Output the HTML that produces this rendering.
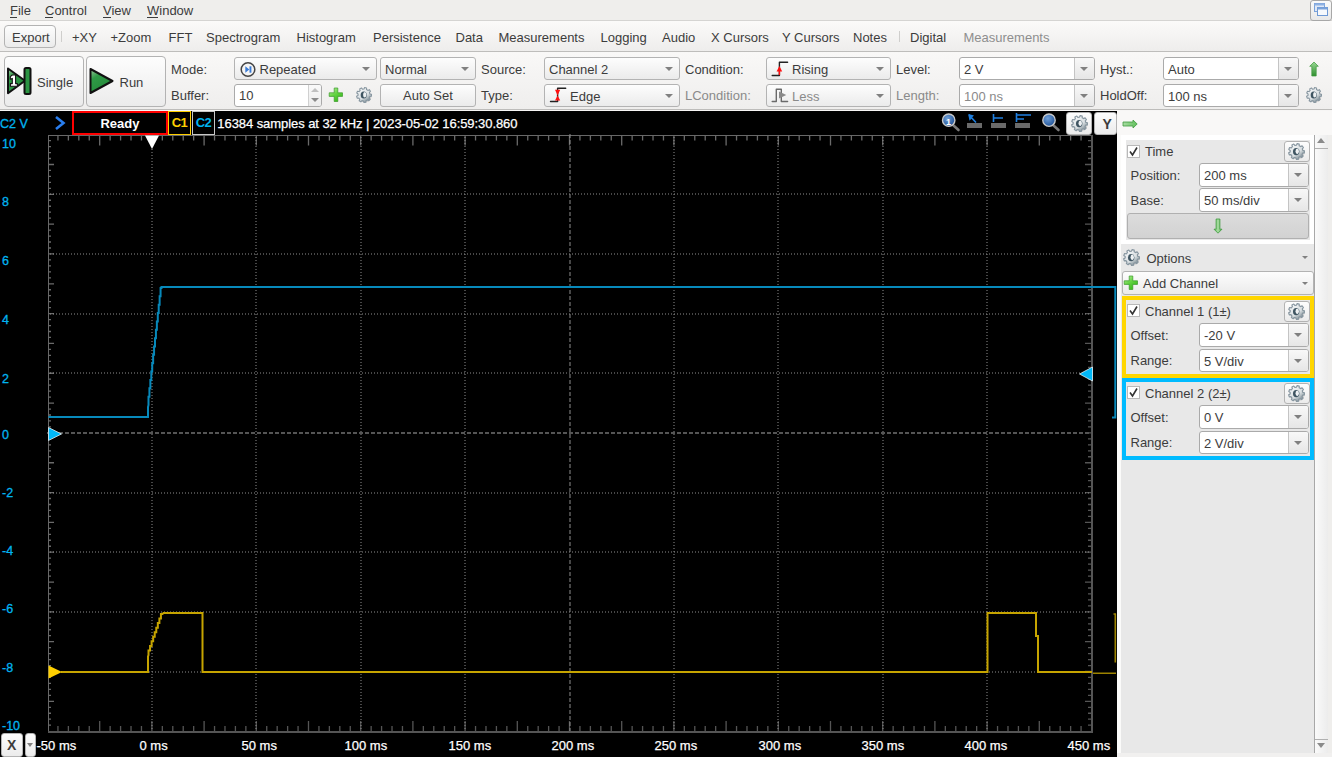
<!DOCTYPE html>
<html><head><meta charset="utf-8"><style>
html,body{margin:0;padding:0;}
body{width:1332px;height:757px;overflow:hidden;position:relative;background:#efeeec;font-family:"Liberation Sans", sans-serif;}
.t{position:absolute;white-space:pre;line-height:1;}
</style></head><body>

<div class="t" style="left:10px;top:4.0px;font-size:13px;color:#3c3c3c;font-weight:normal;">File</div>
<div class="t" style="left:45px;top:4.0px;font-size:13px;color:#3c3c3c;font-weight:normal;">Control</div>
<div class="t" style="left:103px;top:4.0px;font-size:13px;color:#3c3c3c;font-weight:normal;">View</div>
<div class="t" style="left:147px;top:4.0px;font-size:13px;color:#3c3c3c;font-weight:normal;">Window</div>
<div style="position:absolute;left:10px;top:16.5px;width:7px;height:1px;background:#3c3c3c;"></div>
<div style="position:absolute;left:45px;top:16.5px;width:8px;height:1px;background:#3c3c3c;"></div>
<div style="position:absolute;left:103px;top:16.5px;width:8px;height:1px;background:#3c3c3c;"></div>
<div style="position:absolute;left:147px;top:16.5px;width:11px;height:1px;background:#3c3c3c;"></div>
<div style="position:absolute;left:0px;top:20px;width:1332px;height:1px;background:#d5d4d2;"></div>
<div style="position:absolute;left:1310px;top:0px;width:22px;height:21px;box-sizing:border-box;border:1px solid #a8a8a8;border-radius:3px;background:linear-gradient(#fafafa,#e8e8e8);"></div>
<svg style="position:absolute;left:1310px;top:0" width="22" height="20" viewBox="0 0 22 20">
<rect x="4.5" y="3.5" width="10" height="8" fill="#dfe8f6" stroke="#7aa2da" stroke-width="1"/>
<rect x="4.5" y="3.5" width="10" height="2" fill="#8fb2e3"/>
<rect x="7.5" y="7.5" width="10" height="8" fill="#f6f9fd" stroke="#6f9ad6" stroke-width="1"/>
<rect x="7.5" y="7.5" width="10" height="2" fill="#7aa2da"/>
</svg>
<div style="position:absolute;left:0px;top:21px;width:1332px;height:30px;background:linear-gradient(#fbfaf9,#eeedec);"></div>
<div style="position:absolute;left:0px;top:51px;width:1332px;height:1px;background:#bebdbb;"></div>
<div style="position:absolute;left:4px;top:25px;width:52px;height:23px;box-sizing:border-box;border:1px solid #b3b3b3;border-radius:4px;background:linear-gradient(#fdfdfd,#ebebeb);"></div>
<div class="t" style="left:12px;top:30.5px;font-size:13px;color:#3c3c3c;font-weight:normal;">Export</div>
<div style="position:absolute;left:61px;top:31px;width:1px;height:11px;background:#cfcecc;"></div>
<div class="t" style="left:72px;top:30.5px;font-size:13px;color:#3c3c3c;font-weight:normal;">+XY</div>
<div class="t" style="left:110.5px;top:30.5px;font-size:13px;color:#3c3c3c;font-weight:normal;">+Zoom</div>
<div class="t" style="left:168.5px;top:30.5px;font-size:13px;color:#3c3c3c;font-weight:normal;">FFT</div>
<div class="t" style="left:206px;top:30.5px;font-size:13px;color:#3c3c3c;font-weight:normal;">Spectrogram</div>
<div class="t" style="left:296.5px;top:30.5px;font-size:13px;color:#3c3c3c;font-weight:normal;">Histogram</div>
<div class="t" style="left:373px;top:30.5px;font-size:13px;color:#3c3c3c;font-weight:normal;">Persistence</div>
<div class="t" style="left:455.5px;top:30.5px;font-size:13px;color:#3c3c3c;font-weight:normal;">Data</div>
<div class="t" style="left:498.5px;top:30.5px;font-size:13px;color:#3c3c3c;font-weight:normal;">Measurements</div>
<div class="t" style="left:600.5px;top:30.5px;font-size:13px;color:#3c3c3c;font-weight:normal;">Logging</div>
<div class="t" style="left:662px;top:30.5px;font-size:13px;color:#3c3c3c;font-weight:normal;">Audio</div>
<div class="t" style="left:711px;top:30.5px;font-size:13px;color:#3c3c3c;font-weight:normal;">X Cursors</div>
<div class="t" style="left:782px;top:30.5px;font-size:13px;color:#3c3c3c;font-weight:normal;">Y Cursors</div>
<div class="t" style="left:853px;top:30.5px;font-size:13px;color:#3c3c3c;font-weight:normal;">Notes</div>
<div class="t" style="left:910px;top:30.5px;font-size:13px;color:#3c3c3c;font-weight:normal;">Digital</div>
<div style="position:absolute;left:899px;top:31px;width:1px;height:11px;background:#cfcecc;"></div>
<div class="t" style="left:963.5px;top:30.5px;font-size:13px;color:#8e8e8e;font-weight:normal;">Measurements</div>
<div style="position:absolute;left:0px;top:52px;width:1332px;height:57px;background:linear-gradient(#f9f8f7,#efeeed);"></div>
<div style="position:absolute;left:0px;top:109px;width:1332px;height:1px;background:#bdbcba;"></div>
<div style="position:absolute;left:0px;top:110px;width:1332px;height:1px;background:#f7f6f5;"></div>
<div style="position:absolute;left:4px;top:56px;width:80px;height:51px;box-sizing:border-box;border:1px solid #b3b3b3;border-radius:4px;background:linear-gradient(#fdfdfd,#ebebeb);"></div>
<div style="position:absolute;left:86px;top:56px;width:80px;height:51px;box-sizing:border-box;border:1px solid #b3b3b3;border-radius:4px;background:linear-gradient(#fdfdfd,#ebebeb);"></div>
<svg style="position:absolute;left:0;top:56px" width="170" height="51" viewBox="0 56 170 51">
<defs><linearGradient id="gg" x1="0" y1="0" x2="0.6" y2="1"><stop offset="0" stop-color="#9cc79f"/><stop offset="0.35" stop-color="#2f9a46"/><stop offset="1" stop-color="#238a3a"/></linearGradient></defs>
<path d="M8 68.5 L25 80.7 L8 93.2 Z" fill="url(#gg)" stroke="#111" stroke-width="2" stroke-linejoin="round"/>
<rect x="24.5" y="68" width="6" height="26" rx="1.5" fill="#2b9443" stroke="#111" stroke-width="2"/>
<path d="M12.3 75 H15.6 V83.6 H17.4 V86.2 H10.4 V83.6 H12.3 V78.4 L10.3 79.2 V76.6 Z" fill="#fff" stroke="#111" stroke-width="1.1" stroke-linejoin="round"/>
<path d="M90.5 69 L112.5 81 L90.5 93 Z" fill="url(#gg)" stroke="#111" stroke-width="2" stroke-linejoin="round"/>
</svg>
<div class="t" style="left:37px;top:75.5px;font-size:13px;color:#3c3c3c;font-weight:normal;">Single</div>
<div class="t" style="left:119.5px;top:75.5px;font-size:13px;color:#3c3c3c;font-weight:normal;">Run</div>
<div class="t" style="left:171px;top:62.5px;font-size:13px;color:#3c3c3c;font-weight:normal;">Mode:</div>
<div class="t" style="left:171px;top:88.5px;font-size:13px;color:#3c3c3c;font-weight:normal;">Buffer:</div>
<div style="position:absolute;left:234px;top:57px;width:143px;height:23px;box-sizing:border-box;border:1px solid #b3b3b3;border-radius:3px;background:linear-gradient(#fdfdfd,#ebebeb);"></div>
<div class="t" style="left:259.5px;top:62.8px;font-size:13px;color:#3c3c3c;font-weight:normal;">Repeated</div>
<div style="position:absolute;left:361.5px;top:66.75px;width:0;height:0;border-left:4.0px solid transparent;border-right:4.0px solid transparent;border-top:4.5px solid #808080;"></div>
<svg style="position:absolute;left:238px;top:59px" width="20" height="21" viewBox="238 59 20 21">
<circle cx="248" cy="69.5" r="6.8" fill="#f4f4f4" stroke="#444" stroke-width="1.5"/>
<path d="M245.3 66.3 L249.3 69.5 L245.3 72.7 Z" fill="#3a7bd5"/><rect x="249.5" y="66.3" width="1.9" height="6.4" fill="#3a7bd5"/>
</svg>
<div style="position:absolute;left:234px;top:84px;width:88px;height:22.5px;box-sizing:border-box;border:1px solid #aaaaaa;border-radius:3px;background:#fff;"></div>
<div style="position:absolute;left:308px;top:85px;width:13px;height:20.5px;box-sizing:border-box;border-left:1px solid #d0d0d0;background:linear-gradient(#f9f9f9,#ececec);border-radius:0 2px 2px 0;"></div>
<div style="position:absolute;left:311px;top:88px;width:0;height:0;border-left:4px solid transparent;border-right:4px solid transparent;border-bottom:4px solid #c0c0c0;"></div>
<div style="position:absolute;left:311px;top:98px;width:0;height:0;border-left:4px solid transparent;border-right:4px solid transparent;border-top:4px solid #8a8a8a;"></div>
<div class="t" style="left:239px;top:88.5px;font-size:13px;color:#3c3c3c;font-weight:normal;">10</div>
<svg style="position:absolute;left:328px;top:87px" width="16" height="16" viewBox="0 0 16 16">
<defs><linearGradient id="plg" x1="0" y1="0" x2="0.7" y2="1"><stop offset="0" stop-color="#bff5a8"/><stop offset="0.5" stop-color="#66d444"/><stop offset="1" stop-color="#36b81a"/></linearGradient></defs><path d="M6.2 1 H9.8 V5.8 H14.5 V9.4 H9.8 V14.5 H6.2 V9.4 H1.2 V5.8 H6.2 Z" fill="url(#plg)" stroke="#3a9a28" stroke-width="0.7" stroke-linejoin="round"/>
</svg>
<svg style="position:absolute;left:356px;top:87px" width="16" height="16" viewBox="0 0 16 16">
<defs><linearGradient id="gearg" x1="0.2" y1="0.1" x2="0.8" y2="0.9"><stop offset="0" stop-color="#f4f6f7"/><stop offset="0.6" stop-color="#d9dfe2"/><stop offset="1" stop-color="#7d8c94"/></linearGradient></defs>
<ellipse cx="9" cy="9.6" rx="6.5" ry="5.8" fill="#000" opacity="0.12"/>
<path d="M8.00 2.00 L8.63 0.53 L10.57 0.95 L10.52 2.55 L11.86 3.40 L13.28 2.68 L14.50 4.25 L13.43 5.45 L13.91 6.96 L15.47 7.32 L15.39 9.30 L13.80 9.53 L13.20 11.00 L14.16 12.28 L12.82 13.75 L11.46 12.90 L10.05 13.64 L9.97 15.24 L8.00 15.50 L7.50 13.98 L5.95 13.64 L4.85 14.81 L3.18 13.75 L3.77 12.26 L2.80 11.00 L1.21 11.19 L0.61 9.30 L2.02 8.54 L2.09 6.96 L0.75 6.08 L1.50 4.25 L3.07 4.58 L4.14 3.40 L3.68 1.87 L5.43 0.95 L6.43 2.21 Z" fill="url(#gearg)" stroke="#8796a0" stroke-width="1.1" stroke-linejoin="round"/>
<ellipse cx="7.7" cy="8.1" rx="3" ry="3.5" fill="#3f5562"/>
<ellipse cx="8.7" cy="7.8" rx="1.6" ry="2.7" fill="#eef1f3"/>
</svg>
<div style="position:absolute;left:380px;top:57px;width:96px;height:23px;box-sizing:border-box;border:1px solid #b3b3b3;border-radius:3px;background:linear-gradient(#fdfdfd,#ebebeb);"></div>
<div class="t" style="left:385px;top:62.8px;font-size:13px;color:#3c3c3c;font-weight:normal;">Normal</div>
<div style="position:absolute;left:460.5px;top:66.75px;width:0;height:0;border-left:4.0px solid transparent;border-right:4.0px solid transparent;border-top:4.5px solid #808080;"></div>
<div style="position:absolute;left:380px;top:84px;width:96px;height:23px;box-sizing:border-box;border:1px solid #b3b3b3;border-radius:3px;background:linear-gradient(#fdfdfd,#ebebeb);"></div>
<div class="t" style="left:403px;top:89.3px;font-size:13px;color:#3c3c3c;font-weight:normal;">Auto Set</div>
<div class="t" style="left:481px;top:62.5px;font-size:13px;color:#3c3c3c;font-weight:normal;">Source:</div>
<div class="t" style="left:481px;top:88.5px;font-size:13px;color:#3c3c3c;font-weight:normal;">Type:</div>
<div style="position:absolute;left:544px;top:57px;width:136px;height:23px;box-sizing:border-box;border:1px solid #b3b3b3;border-radius:3px;background:linear-gradient(#fdfdfd,#ebebeb);"></div>
<div class="t" style="left:549px;top:62.8px;font-size:13px;color:#3c3c3c;font-weight:normal;">Channel 2</div>
<div style="position:absolute;left:664.5px;top:66.75px;width:0;height:0;border-left:4.0px solid transparent;border-right:4.0px solid transparent;border-top:4.5px solid #808080;"></div>
<div style="position:absolute;left:544px;top:84px;width:136px;height:23px;box-sizing:border-box;border:1px solid #b3b3b3;border-radius:3px;background:linear-gradient(#fdfdfd,#ebebeb);"></div>
<div class="t" style="left:570px;top:89.8px;font-size:13px;color:#3c3c3c;font-weight:normal;">Edge</div>
<div style="position:absolute;left:664.5px;top:93.75px;width:0;height:0;border-left:4.0px solid transparent;border-right:4.0px solid transparent;border-top:4.5px solid #808080;"></div>
<svg style="position:absolute;left:544px;top:84px" width="26" height="23" viewBox="544 84 26 23">
<path d="M550.5 101.5 H557.6 V88.3 H565.7" fill="none" stroke="#222" stroke-width="1.4" stroke-linejoin="round" stroke-linecap="round"/>
<path d="M555 89.8 H560.2 L557.6 95.4 Z M555 100.6 H560.2 L557.6 95.4 Z" fill="#ff1010"/>
</svg>
<div class="t" style="left:685px;top:62.5px;font-size:13px;color:#3c3c3c;font-weight:normal;">Condition:</div>
<div class="t" style="left:685px;top:88.5px;font-size:13px;color:#8a8a8a;font-weight:normal;">LCondition:</div>
<div style="position:absolute;left:766px;top:57px;width:125px;height:23px;box-sizing:border-box;border:1px solid #b3b3b3;border-radius:3px;background:linear-gradient(#fdfdfd,#ebebeb);"></div>
<div class="t" style="left:792px;top:62.8px;font-size:13px;color:#3c3c3c;font-weight:normal;">Rising</div>
<div style="position:absolute;left:875.5px;top:66.75px;width:0;height:0;border-left:4.0px solid transparent;border-right:4.0px solid transparent;border-top:4.5px solid #808080;"></div>
<svg style="position:absolute;left:766px;top:57px" width="26" height="23" viewBox="766 57 26 23">
<path d="M772.2 75.5 H779.4 V62.3 H787.6" fill="none" stroke="#222" stroke-width="1.4" stroke-linejoin="round" stroke-linecap="round"/>
<path d="M779.4 66 L782.2 71.5 H776.6 Z" fill="#ff1010"/><rect x="778.7" y="70" width="1.4" height="5" fill="#ff1010"/>
</svg>
<div style="position:absolute;left:766px;top:84px;width:125px;height:23px;box-sizing:border-box;border:1px solid #b3b3b3;border-radius:3px;background:linear-gradient(#fdfdfd,#ebebeb);"></div>
<div class="t" style="left:792px;top:89.8px;font-size:13px;color:#8a8a8a;font-weight:normal;">Less</div>
<div style="position:absolute;left:875.5px;top:93.75px;width:0;height:0;border-left:4.0px solid transparent;border-right:4.0px solid transparent;border-top:4.5px solid #808080;"></div>
<svg style="position:absolute;left:766px;top:84px" width="26" height="23" viewBox="766 84 26 23">
<path d="M772.2 101.5 H776.3 V89.3 H781.3 V101.5 H787.6" fill="none" stroke="#6a6a6a" stroke-width="1.4" stroke-linejoin="round" stroke-linecap="round"/>
<path d="M779 91.5 L786.3 95 L779 98.5 Z" fill="#8a8a8a"/>
</svg>
<div class="t" style="left:896px;top:62.5px;font-size:13px;color:#3c3c3c;font-weight:normal;">Level:</div>
<div class="t" style="left:896px;top:88.5px;font-size:13px;color:#8a8a8a;font-weight:normal;">Length:</div>
<div style="position:absolute;left:959px;top:57px;width:136px;height:23px;box-sizing:border-box;border:1px solid #aaaaaa;border-radius:3px;background:#fff;overflow:hidden;"></div>
<div style="position:absolute;left:1074px;top:58px;width:20px;height:21px;box-sizing:border-box;border-left:1px solid #c4c4c4;border-radius:0 2px 2px 0;background:linear-gradient(#f8f8f8,#e6e6e6);"></div>
<div class="t" style="left:964px;top:62.8px;font-size:13px;color:#3c3c3c;font-weight:normal;">2 V</div>
<div style="position:absolute;left:1080.0px;top:66.75px;width:0;height:0;border-left:4.0px solid transparent;border-right:4.0px solid transparent;border-top:4.5px solid #808080;"></div>
<div style="position:absolute;left:959px;top:84px;width:136px;height:23px;box-sizing:border-box;border:1px solid #aaaaaa;border-radius:3px;background:#fff;overflow:hidden;"></div>
<div style="position:absolute;left:1074px;top:85px;width:20px;height:21px;box-sizing:border-box;border-left:1px solid #c4c4c4;border-radius:0 2px 2px 0;background:linear-gradient(#f8f8f8,#e6e6e6);"></div>
<div class="t" style="left:964px;top:89.8px;font-size:13px;color:#8a8a8a;font-weight:normal;">100 ns</div>
<div style="position:absolute;left:1080.0px;top:93.75px;width:0;height:0;border-left:4.0px solid transparent;border-right:4.0px solid transparent;border-top:4.5px solid #808080;"></div>
<div class="t" style="left:1100px;top:62.5px;font-size:13px;color:#3c3c3c;font-weight:normal;">Hyst.:</div>
<div class="t" style="left:1100px;top:88.5px;font-size:13px;color:#3c3c3c;font-weight:normal;">HoldOff:</div>
<div style="position:absolute;left:1163px;top:57px;width:136px;height:23px;box-sizing:border-box;border:1px solid #aaaaaa;border-radius:3px;background:#fff;overflow:hidden;"></div>
<div style="position:absolute;left:1278px;top:58px;width:20px;height:21px;box-sizing:border-box;border-left:1px solid #c4c4c4;border-radius:0 2px 2px 0;background:linear-gradient(#f8f8f8,#e6e6e6);"></div>
<div class="t" style="left:1168px;top:62.8px;font-size:13px;color:#3c3c3c;font-weight:normal;">Auto</div>
<div style="position:absolute;left:1284.0px;top:66.75px;width:0;height:0;border-left:4.0px solid transparent;border-right:4.0px solid transparent;border-top:4.5px solid #808080;"></div>
<div style="position:absolute;left:1163px;top:84px;width:136px;height:23px;box-sizing:border-box;border:1px solid #aaaaaa;border-radius:3px;background:#fff;overflow:hidden;"></div>
<div style="position:absolute;left:1278px;top:85px;width:20px;height:21px;box-sizing:border-box;border-left:1px solid #c4c4c4;border-radius:0 2px 2px 0;background:linear-gradient(#f8f8f8,#e6e6e6);"></div>
<div class="t" style="left:1168px;top:89.8px;font-size:13px;color:#3c3c3c;font-weight:normal;">100 ns</div>
<div style="position:absolute;left:1284.0px;top:93.75px;width:0;height:0;border-left:4.0px solid transparent;border-right:4.0px solid transparent;border-top:4.5px solid #808080;"></div>
<svg style="position:absolute;left:1300px;top:55px" width="30" height="25" viewBox="1300 55 30 25">
<defs><linearGradient id="ua" x1="0" y1="0" x2="0" y2="1"><stop offset="0" stop-color="#9ad894"/><stop offset="1" stop-color="#2f8f2f"/></linearGradient></defs>
<path d="M1314 62 L1318.3 66.3 H1316.2 V76 H1311.8 V66.3 H1309.7 Z" fill="url(#ua)" stroke="#3d9a3d" stroke-width="0.7"/>
</svg>
<svg style="position:absolute;left:1306px;top:87px" width="16" height="16" viewBox="0 0 16 16">
<defs><linearGradient id="gearg" x1="0.2" y1="0.1" x2="0.8" y2="0.9"><stop offset="0" stop-color="#f4f6f7"/><stop offset="0.6" stop-color="#d9dfe2"/><stop offset="1" stop-color="#7d8c94"/></linearGradient></defs>
<ellipse cx="9" cy="9.6" rx="6.5" ry="5.8" fill="#000" opacity="0.12"/>
<path d="M8.00 2.00 L8.63 0.53 L10.57 0.95 L10.52 2.55 L11.86 3.40 L13.28 2.68 L14.50 4.25 L13.43 5.45 L13.91 6.96 L15.47 7.32 L15.39 9.30 L13.80 9.53 L13.20 11.00 L14.16 12.28 L12.82 13.75 L11.46 12.90 L10.05 13.64 L9.97 15.24 L8.00 15.50 L7.50 13.98 L5.95 13.64 L4.85 14.81 L3.18 13.75 L3.77 12.26 L2.80 11.00 L1.21 11.19 L0.61 9.30 L2.02 8.54 L2.09 6.96 L0.75 6.08 L1.50 4.25 L3.07 4.58 L4.14 3.40 L3.68 1.87 L5.43 0.95 L6.43 2.21 Z" fill="url(#gearg)" stroke="#8796a0" stroke-width="1.1" stroke-linejoin="round"/>
<ellipse cx="7.7" cy="8.1" rx="3" ry="3.5" fill="#3f5562"/>
<ellipse cx="8.7" cy="7.8" rx="1.6" ry="2.7" fill="#eef1f3"/>
</svg>
<div style="position:absolute;left:0px;top:111px;width:1117px;height:646px;background:#000;"></div>
<svg style="position:absolute;left:0;top:0" width="1117" height="757" viewBox="0 0 1117 757">
<path d="M48.5 135 V733 M48 135.5 H1093" fill="none" stroke="#686868" stroke-width="1"/>
<path d="M1092 135 V733 M48 732 H1093" fill="none" stroke="#555555" stroke-width="2"/>
<path d="M57.940 135.5v5M68.380 135.5v5M78.820 135.5v5M89.260 135.5v5M99.700 135.5v10M110.140 135.5v5M120.580 135.5v5M131.020 135.5v5M141.460 135.5v5M151.900 135.5v10M162.340 135.5v5M172.780 135.5v5M183.220 135.5v5M193.660 135.5v5M204.100 135.5v10M214.540 135.5v5M224.980 135.5v5M235.420 135.5v5M245.860 135.5v5M256.300 135.5v10M266.740 135.5v5M277.180 135.5v5M287.620 135.5v5M298.060 135.5v5M308.500 135.5v10M318.940 135.5v5M329.380 135.5v5M339.820 135.5v5M350.260 135.5v5M360.700 135.5v10M371.140 135.5v5M381.580 135.5v5M392.020 135.5v5M402.460 135.5v5M412.900 135.5v10M423.340 135.5v5M433.780 135.5v5M444.220 135.5v5M454.660 135.5v5M465.100 135.5v10M475.540 135.5v5M485.980 135.5v5M496.420 135.5v5M506.860 135.5v5M517.300 135.5v10M527.740 135.5v5M538.180 135.5v5M548.620 135.5v5M559.060 135.5v5M569.500 135.5v10M579.940 135.5v5M590.380 135.5v5M600.820 135.5v5M611.260 135.5v5M621.700 135.5v10M632.140 135.5v5M642.580 135.5v5M653.020 135.5v5M663.460 135.5v5M673.900 135.5v10M684.340 135.5v5M694.780 135.5v5M705.220 135.5v5M715.660 135.5v5M726.100 135.5v10M736.540 135.5v5M746.980 135.5v5M757.420 135.5v5M767.860 135.5v5M778.300 135.5v10M788.740 135.5v5M799.180 135.5v5M809.620 135.5v5M820.060 135.5v5M830.500 135.5v10M840.940 135.5v5M851.380 135.5v5M861.820 135.5v5M872.260 135.5v5M882.700 135.5v10M893.140 135.5v5M903.580 135.5v5M914.020 135.5v5M924.460 135.5v5M934.900 135.5v10M945.340 135.5v5M955.780 135.5v5M966.220 135.5v5M976.660 135.5v5M987.100 135.5v10M997.540 135.5v5M1007.980 135.5v5M1018.420 135.5v5M1028.860 135.5v5M1039.300 135.5v10M1049.740 135.5v5M1060.180 135.5v5M1070.620 135.5v5M1081.060 135.5v5M48.5 140.615h2.5M48.5 146.580h2.5M48.5 152.545h2.5M48.5 158.510h2.5M48.5 164.475h5.5M48.5 170.440h2.5M48.5 176.405h2.5M48.5 182.370h2.5M48.5 188.335h2.5M48.5 194.300h5.5M48.5 200.265h2.5M48.5 206.230h2.5M48.5 212.195h2.5M48.5 218.160h2.5M48.5 224.125h5.5M48.5 230.090h2.5M48.5 236.055h2.5M48.5 242.020h2.5M48.5 247.985h2.5M48.5 253.950h5.5M48.5 259.915h2.5M48.5 265.880h2.5M48.5 271.845h2.5M48.5 277.810h2.5M48.5 283.775h5.5M48.5 289.740h2.5M48.5 295.705h2.5M48.5 301.670h2.5M48.5 307.635h2.5M48.5 313.600h5.5M48.5 319.565h2.5M48.5 325.530h2.5M48.5 331.495h2.5M48.5 337.460h2.5M48.5 343.425h5.5M48.5 349.390h2.5M48.5 355.355h2.5M48.5 361.320h2.5M48.5 367.285h2.5M48.5 373.250h5.5M48.5 379.215h2.5M48.5 385.180h2.5M48.5 391.145h2.5M48.5 397.110h2.5M48.5 403.075h5.5M48.5 409.040h2.5M48.5 415.005h2.5M48.5 420.970h2.5M48.5 426.935h2.5M48.5 432.900h5.5M48.5 438.865h2.5M48.5 444.830h2.5M48.5 450.795h2.5M48.5 456.760h2.5M48.5 462.725h5.5M48.5 468.690h2.5M48.5 474.655h2.5M48.5 480.620h2.5M48.5 486.585h2.5M48.5 492.550h5.5M48.5 498.515h2.5M48.5 504.480h2.5M48.5 510.445h2.5M48.5 516.410h2.5M48.5 522.375h5.5M48.5 528.340h2.5M48.5 534.305h2.5M48.5 540.270h2.5M48.5 546.235h2.5M48.5 552.200h5.5M48.5 558.165h2.5M48.5 564.130h2.5M48.5 570.095h2.5M48.5 576.060h2.5M48.5 582.025h5.5M48.5 587.990h2.5M48.5 593.955h2.5M48.5 599.920h2.5M48.5 605.885h2.5M48.5 611.850h5.5M48.5 617.815h2.5M48.5 623.780h2.5M48.5 629.745h2.5M48.5 635.710h2.5M48.5 641.675h5.5M48.5 647.640h2.5M48.5 653.605h2.5M48.5 659.570h2.5M48.5 665.535h2.5M48.5 671.500h5.5M48.5 677.465h2.5M48.5 683.430h2.5M48.5 689.395h2.5M48.5 695.360h2.5M48.5 701.325h5.5M48.5 707.290h2.5M48.5 713.255h2.5M48.5 719.220h2.5M48.5 725.185h2.5" stroke="#6a6a6a" stroke-width="1.3" fill="none"/>
<path d="M57.940 731v-5M68.380 731v-5M78.820 731v-5M89.260 731v-5M99.700 731v-10M110.140 731v-5M120.580 731v-5M131.020 731v-5M141.460 731v-5M151.900 731v-10M162.340 731v-5M172.780 731v-5M183.220 731v-5M193.660 731v-5M204.100 731v-10M214.540 731v-5M224.980 731v-5M235.420 731v-5M245.860 731v-5M256.300 731v-10M266.740 731v-5M277.180 731v-5M287.620 731v-5M298.060 731v-5M308.500 731v-10M318.940 731v-5M329.380 731v-5M339.820 731v-5M350.260 731v-5M360.700 731v-10M371.140 731v-5M381.580 731v-5M392.020 731v-5M402.460 731v-5M412.900 731v-10M423.340 731v-5M433.780 731v-5M444.220 731v-5M454.660 731v-5M465.100 731v-10M475.540 731v-5M485.980 731v-5M496.420 731v-5M506.860 731v-5M517.300 731v-10M527.740 731v-5M538.180 731v-5M548.620 731v-5M559.060 731v-5M569.500 731v-10M579.940 731v-5M590.380 731v-5M600.820 731v-5M611.260 731v-5M621.700 731v-10M632.140 731v-5M642.580 731v-5M653.020 731v-5M663.460 731v-5M673.900 731v-10M684.340 731v-5M694.780 731v-5M705.220 731v-5M715.660 731v-5M726.100 731v-10M736.540 731v-5M746.980 731v-5M757.420 731v-5M767.860 731v-5M778.300 731v-10M788.740 731v-5M799.180 731v-5M809.620 731v-5M820.060 731v-5M830.500 731v-10M840.940 731v-5M851.380 731v-5M861.820 731v-5M872.260 731v-5M882.700 731v-10M893.140 731v-5M903.580 731v-5M914.020 731v-5M924.460 731v-5M934.900 731v-10M945.340 731v-5M955.780 731v-5M966.220 731v-5M976.660 731v-5M987.100 731v-10M997.540 731v-5M1007.980 731v-5M1018.420 731v-5M1028.860 731v-5M1039.300 731v-10M1049.740 731v-5M1060.180 731v-5M1070.620 731v-5M1081.060 731v-5M1091 140.615h-3M1091 146.580h-3M1091 152.545h-3M1091 158.510h-3M1091 164.475h-6M1091 170.440h-3M1091 176.405h-3M1091 182.370h-3M1091 188.335h-3M1091 194.300h-6M1091 200.265h-3M1091 206.230h-3M1091 212.195h-3M1091 218.160h-3M1091 224.125h-6M1091 230.090h-3M1091 236.055h-3M1091 242.020h-3M1091 247.985h-3M1091 253.950h-6M1091 259.915h-3M1091 265.880h-3M1091 271.845h-3M1091 277.810h-3M1091 283.775h-6M1091 289.740h-3M1091 295.705h-3M1091 301.670h-3M1091 307.635h-3M1091 313.600h-6M1091 319.565h-3M1091 325.530h-3M1091 331.495h-3M1091 337.460h-3M1091 343.425h-6M1091 349.390h-3M1091 355.355h-3M1091 361.320h-3M1091 367.285h-3M1091 373.250h-6M1091 379.215h-3M1091 385.180h-3M1091 391.145h-3M1091 397.110h-3M1091 403.075h-6M1091 409.040h-3M1091 415.005h-3M1091 420.970h-3M1091 426.935h-3M1091 432.900h-6M1091 438.865h-3M1091 444.830h-3M1091 450.795h-3M1091 456.760h-3M1091 462.725h-6M1091 468.690h-3M1091 474.655h-3M1091 480.620h-3M1091 486.585h-3M1091 492.550h-6M1091 498.515h-3M1091 504.480h-3M1091 510.445h-3M1091 516.410h-3M1091 522.375h-6M1091 528.340h-3M1091 534.305h-3M1091 540.270h-3M1091 546.235h-3M1091 552.200h-6M1091 558.165h-3M1091 564.130h-3M1091 570.095h-3M1091 576.060h-3M1091 582.025h-6M1091 587.990h-3M1091 593.955h-3M1091 599.920h-3M1091 605.885h-3M1091 611.850h-6M1091 617.815h-3M1091 623.780h-3M1091 629.745h-3M1091 635.710h-3M1091 641.675h-6M1091 647.640h-3M1091 653.605h-3M1091 659.570h-3M1091 665.535h-3M1091 671.500h-6M1091 677.465h-3M1091 683.430h-3M1091 689.395h-3M1091 695.360h-3M1091 701.325h-6M1091 707.290h-3M1091 713.255h-3M1091 719.220h-3M1091 725.185h-3" stroke="#555555" stroke-width="1.3" fill="none"/>
<path d="M152 137V731M256 137V731M361 137V731M465 137V731M674 137V731M778 137V731M883 137V731M987 137V731M50 194H1091M50 254H1091M50 314H1091M50 373H1091M50 493H1091M50 552H1091M50 612H1091M50 672H1091" stroke="#8e8e8e" stroke-width="1" stroke-dasharray="1 2" fill="none"/>
<path d="M570 134V731" stroke="#8e8e8e" stroke-width="1" stroke-dasharray="4 2" fill="none"/>
<path d="M47 433H1091" stroke="#555555" stroke-width="2" stroke-dasharray="4 2" fill="none"/>
<path d="M48.5 417 H148 V407 L148.50 405.00 L148.50 396.64 L149.43 396.64 L149.43 388.29 L150.36 388.29 L150.36 379.93 L151.29 379.93 L151.29 371.57 L152.21 371.57 L152.21 363.21 L153.14 363.21 L153.14 354.86 L154.07 354.86 L154.07 346.50 L155.00 346.50 L155.00 338.14 L155.93 338.14 L155.93 329.79 L156.86 329.79 L156.86 321.43 L157.79 321.43 L157.79 313.07 L158.71 313.07 L158.71 304.71 L159.64 304.71 L159.64 296.36 L160.57 296.36 L160.57 288.00 L161.50 288.00 L161.5 287 H1115.3 V417.5 H1112" stroke="#0789bb" stroke-width="2" fill="none" stroke-linejoin="miter"/>
<path d="M61 672 H148 V656.5 L148.50 655.00 L148.50 650.44 L150.06 650.44 L150.06 645.89 L151.61 645.89 L151.61 641.33 L153.17 641.33 L153.17 636.78 L154.72 636.78 L154.72 632.22 L156.28 632.22 L156.28 627.67 L157.83 627.67 L157.83 623.11 L159.39 623.11 L159.39 618.56 L160.94 618.56 L160.94 614.00 L162.50 614.00 L163.5 613 H202.5 V672 H987.5 V613 H1036 V636 H1038 V672 H1092" stroke="#c6a400" stroke-width="2" fill="none"/>
<path d="M1093 673.2 H1116 M1115.3 614 V662.5 M1113.5 614 H1116" stroke="#9c8200" stroke-width="1.6" fill="none"/>
<path d="M48.5 427.5 L61.5 434 L48.5 440.5 Z" fill="#00b8f8" stroke="#fff" stroke-width="0.7"/>
<path d="M48.5 665.5 L62 672 L48.5 678.5 Z" fill="#ffd000"/>
<path d="M1092.5 367 L1079.5 374 L1092.5 381 Z" fill="#00b8f8" stroke="#fff" stroke-width="0.7"/>
<path d="M145 135.5 H159 L152 149 Z" fill="#ffffff"/>
</svg>
<div class="t" style="left:0px;top:118.42px;font-size:12.5px;color:#00b4f0;font-weight:normal;-webkit-text-stroke:0.3px #00b4f0;">C2 V</div>
<svg style="position:absolute;left:54px;top:115px" width="12" height="16" viewBox="0 0 12 16">
<path d="M2 2 L9.5 8 L2 14" fill="none" stroke="#2a7ff0" stroke-width="2.6" stroke-linejoin="miter"/>
</svg>
<div style="position:absolute;left:72px;top:111px;width:96px;height:24px;box-sizing:border-box;border:2px solid #ff0000;background:#000;"></div>
<div class="t" style="left:72px;top:117px;width:96px;text-align:center;font-size:13px;font-weight:bold;color:#fff;">Ready</div>
<div style="position:absolute;left:168px;top:111px;width:23px;height:24px;box-sizing:border-box;border:1px solid #ffd000;background:#000;"></div>
<div class="t" style="left:168px;top:116px;width:23px;text-align:center;font-size:13px;font-weight:bold;color:#ffd000;letter-spacing:-0.5px">C1</div>
<div style="position:absolute;left:192px;top:111px;width:23px;height:24px;box-sizing:border-box;border:1px solid #c8c8c8;background:#000;"></div>
<div class="t" style="left:192px;top:116px;width:23px;text-align:center;font-size:13px;font-weight:bold;color:#00b4f0;letter-spacing:-0.5px">C2</div>
<div class="t" style="left:217.3px;top:117.0px;font-size:13px;color:#ffffff;font-weight:normal;-webkit-text-stroke:0.25px #fff;letter-spacing:-0.065px;">16384 samples at 32 kHz | 2023-05-02 16:59:30.860</div>
<svg style="position:absolute;left:935px;top:108px" width="130" height="28" viewBox="935 108 130 28">
<defs><radialGradient id="mg" cx="0.4" cy="0.35" r="0.7"><stop offset="0" stop-color="#6f9fd8"/><stop offset="1" stop-color="#1d4f94"/></radialGradient></defs>
<line x1="953" y1="125" x2="958.5" y2="130" stroke="#7a7a7a" stroke-width="2.6" stroke-linecap="round"/>
<circle cx="948.7" cy="120.2" r="6.2" fill="url(#mg)" stroke="#c8c8c8" stroke-width="1.4"/>
<text x="946" y="124.5" font-family="Liberation Sans" font-weight="bold" font-size="9" fill="#fff">1</text>
<path d="M969 114.5 L970 119 L971.3 117.5 L976 122.5" stroke="#1f7fe0" stroke-width="1.6" fill="none"/>
<path d="M968.5 114 L974 115.5 L969.8 119.5 Z" fill="#1f7fe0"/>
<rect x="967" y="123" width="15" height="5" fill="#6a6a6a"/>
<path d="M993.5 114 V122 M993.5 118 H1003" stroke="#1f7fe0" stroke-width="1.6" fill="none"/>
<rect x="991" y="123" width="15" height="5" fill="#6a6a6a"/>
<path d="M1016.5 113 V122 M1016.5 115 H1031 M1016.5 119 H1024" stroke="#1f7fe0" stroke-width="1.6" fill="none"/>
<rect x="1015" y="123" width="15" height="5" fill="#6a6a6a"/>
<line x1="1053" y1="125" x2="1058.5" y2="130" stroke="#7a7a7a" stroke-width="2.6" stroke-linecap="round"/>
<circle cx="1049" cy="120.2" r="6.2" fill="url(#mg)" stroke="#c8c8c8" stroke-width="1.4"/>
</svg>
<div style="position:absolute;left:1066px;top:112px;width:26px;height:23px;box-sizing:border-box;border:1px solid #b3b3b3;border-radius:3px;background:linear-gradient(#fdfdfd,#ebebeb);"></div>
<svg style="position:absolute;left:1071px;top:115px" width="17" height="17" viewBox="0 0 16 16">
<defs><linearGradient id="gearg" x1="0.2" y1="0.1" x2="0.8" y2="0.9"><stop offset="0" stop-color="#f4f6f7"/><stop offset="0.6" stop-color="#d9dfe2"/><stop offset="1" stop-color="#7d8c94"/></linearGradient></defs>
<ellipse cx="9" cy="9.6" rx="6.5" ry="5.8" fill="#000" opacity="0.12"/>
<path d="M8.00 2.00 L8.63 0.53 L10.57 0.95 L10.52 2.55 L11.86 3.40 L13.28 2.68 L14.50 4.25 L13.43 5.45 L13.91 6.96 L15.47 7.32 L15.39 9.30 L13.80 9.53 L13.20 11.00 L14.16 12.28 L12.82 13.75 L11.46 12.90 L10.05 13.64 L9.97 15.24 L8.00 15.50 L7.50 13.98 L5.95 13.64 L4.85 14.81 L3.18 13.75 L3.77 12.26 L2.80 11.00 L1.21 11.19 L0.61 9.30 L2.02 8.54 L2.09 6.96 L0.75 6.08 L1.50 4.25 L3.07 4.58 L4.14 3.40 L3.68 1.87 L5.43 0.95 L6.43 2.21 Z" fill="url(#gearg)" stroke="#8796a0" stroke-width="1.1" stroke-linejoin="round"/>
<ellipse cx="7.7" cy="8.1" rx="3" ry="3.5" fill="#3f5562"/>
<ellipse cx="8.7" cy="7.8" rx="1.6" ry="2.7" fill="#eef1f3"/>
</svg>
<div style="position:absolute;left:1094px;top:112px;width:23px;height:23px;box-sizing:border-box;border:1px solid #b3b3b3;border-radius:3px;background:linear-gradient(#fdfdfd,#ebebeb);"></div>
<div class="t" style="left:1102.5px;top:117.15px;font-size:14px;color:#3c3c3c;font-weight:bold;">Y</div>
<div class="t" style="left:2px;top:138.10000000000002px;font-size:12.5px;color:#00b4f0;-webkit-text-stroke:0.3px #00b4f0">10</div>
<div class="t" style="left:2px;top:196.0px;font-size:12.5px;color:#00b4f0;-webkit-text-stroke:0.3px #00b4f0">8</div>
<div class="t" style="left:2px;top:254.70000000000002px;font-size:12.5px;color:#00b4f0;-webkit-text-stroke:0.3px #00b4f0">6</div>
<div class="t" style="left:2px;top:313.7px;font-size:12.5px;color:#00b4f0;-webkit-text-stroke:0.3px #00b4f0">4</div>
<div class="t" style="left:2px;top:372.5px;font-size:12.5px;color:#00b4f0;-webkit-text-stroke:0.3px #00b4f0">2</div>
<div class="t" style="left:2px;top:429.1px;font-size:12.5px;color:#00b4f0;-webkit-text-stroke:0.3px #00b4f0">0</div>
<div class="t" style="left:2px;top:486.8px;font-size:12.5px;color:#00b4f0;-webkit-text-stroke:0.3px #00b4f0">-2</div>
<div class="t" style="left:2px;top:544.8px;font-size:12.5px;color:#00b4f0;-webkit-text-stroke:0.3px #00b4f0">-4</div>
<div class="t" style="left:2px;top:603.0px;font-size:12.5px;color:#00b4f0;-webkit-text-stroke:0.3px #00b4f0">-6</div>
<div class="t" style="left:2px;top:661.9px;font-size:12.5px;color:#00b4f0;-webkit-text-stroke:0.3px #00b4f0">-8</div>
<div class="t" style="left:2px;top:720.1999999999999px;font-size:12.5px;color:#00b4f0;-webkit-text-stroke:0.3px #00b4f0">-10</div>
<div class="t" style="left:36.5px;top:739.3px;font-size:13px;color:#ffffff;font-weight:normal;-webkit-text-stroke:0.25px #fff;">-50 ms</div>
<div class="t" style="left:139.5px;top:739.3px;font-size:13px;color:#ffffff;font-weight:normal;-webkit-text-stroke:0.25px #fff;">0 ms</div>
<div class="t" style="left:241.5px;top:739.3px;font-size:13px;color:#ffffff;font-weight:normal;-webkit-text-stroke:0.25px #fff;">50 ms</div>
<div class="t" style="left:344.5px;top:739.3px;font-size:13px;color:#ffffff;font-weight:normal;-webkit-text-stroke:0.25px #fff;">100 ms</div>
<div class="t" style="left:448.5px;top:739.3px;font-size:13px;color:#ffffff;font-weight:normal;-webkit-text-stroke:0.25px #fff;">150 ms</div>
<div class="t" style="left:551.5px;top:739.3px;font-size:13px;color:#ffffff;font-weight:normal;-webkit-text-stroke:0.25px #fff;">200 ms</div>
<div class="t" style="left:654.5px;top:739.3px;font-size:13px;color:#ffffff;font-weight:normal;-webkit-text-stroke:0.25px #fff;">250 ms</div>
<div class="t" style="left:758.5px;top:739.3px;font-size:13px;color:#ffffff;font-weight:normal;-webkit-text-stroke:0.25px #fff;">300 ms</div>
<div class="t" style="left:861.5px;top:739.3px;font-size:13px;color:#ffffff;font-weight:normal;-webkit-text-stroke:0.25px #fff;">350 ms</div>
<div class="t" style="left:964.5px;top:739.3px;font-size:13px;color:#ffffff;font-weight:normal;-webkit-text-stroke:0.25px #fff;">400 ms</div>
<div class="t" style="left:1067.5px;top:739.3px;font-size:13px;color:#ffffff;font-weight:normal;-webkit-text-stroke:0.25px #fff;">450 ms</div>
<div style="position:absolute;left:1px;top:733px;width:22px;height:24px;box-sizing:border-box;border:1px solid #b3b3b3;border-radius:3px;background:linear-gradient(#fdfdfd,#ebebeb);"></div>
<div class="t" style="left:7px;top:738.15px;font-size:14px;color:#3c3c3c;font-weight:bold;">X</div>
<div style="position:absolute;left:25px;top:733px;width:11px;height:24px;box-sizing:border-box;border:1px solid #b3b3b3;border-radius:3px;background:linear-gradient(#fdfdfd,#ebebeb);"></div>
<div style="position:absolute;left:27.0px;top:743.0px;width:0;height:0;border-left:3.5px solid transparent;border-right:3.5px solid transparent;border-top:4px solid #808080;"></div>
<div style="position:absolute;left:1117px;top:111px;width:215px;height:646px;background:#efeeec;"></div>
<div style="position:absolute;left:1117px;top:135px;width:4px;height:622px;background:#fbfbfa;"></div>
<div style="position:absolute;left:1117px;top:111px;width:215px;height:24px;background:#f9f8f7;"></div>
<svg style="position:absolute;left:1117px;top:111px" width="30" height="24" viewBox="1117 111 30 24">
<defs><linearGradient id="ra" x1="0" y1="0" x2="1" y2="0"><stop offset="0" stop-color="#a9dca3"/><stop offset="1" stop-color="#5fbf5a"/></linearGradient></defs>
<path d="M1123 122 H1133 V120 L1137.2 124 L1133 128 V126 H1123 Z" fill="url(#ra)" stroke="#3f9a3f" stroke-width="0.8" stroke-linejoin="round"/>
</svg>
<div style="position:absolute;left:1121px;top:135px;width:194px;height:618px;background:#e8e8e8;"></div>
<div style="position:absolute;left:1121px;top:135px;width:194px;height:109px;background:#ffffff;"></div>
<div style="position:absolute;left:1314px;top:135px;width:1px;height:618px;background:#a8a8a8;"></div>
<div style="position:absolute;left:1315px;top:135px;width:13px;height:618px;background:linear-gradient(90deg,#fafafa,#ececec);"></div>
<div style="position:absolute;left:1315px;top:148px;width:13px;height:1px;background:#b0b0b0;"></div>
<div style="position:absolute;left:1315px;top:739px;width:13px;height:1px;background:#b0b0b0;"></div>
<div style="position:absolute;left:1317px;top:138px;width:0;height:0;border-left:4px solid transparent;border-right:4px solid transparent;border-bottom:5px solid #8a8a8a;"></div>
<div style="position:absolute;left:1317px;top:743px;width:0;height:0;border-left:4px solid transparent;border-right:4px solid transparent;border-top:5px solid #8a8a8a;"></div>
<div style="position:absolute;left:1117px;top:753px;width:215px;height:4px;background:#f1f0ef;"></div>
<div style="position:absolute;left:1126px;top:140px;width:184px;height:100px;background:#e8e8e8;"></div>
<div style="position:absolute;left:1127px;top:145px;width:13px;height:13px;box-sizing:border-box;border:1px solid #b9b9b9;background:#fff;"></div>
<svg style="position:absolute;left:1127px;top:145px" width="13" height="13" viewBox="0 0 13 13"><path d="M3 6.5 L5.5 10 L10 2.5" fill="none" stroke="#333" stroke-width="1.6"/></svg>
<div class="t" style="left:1145px;top:145.2px;font-size:13px;color:#3c3c3c;font-weight:normal;">Time</div>
<div style="position:absolute;left:1284px;top:141px;width:26px;height:21px;box-sizing:border-box;border:1px solid #b3b3b3;border-radius:3px;background:linear-gradient(#fdfdfd,#ebebeb);"></div>
<svg style="position:absolute;left:1288px;top:143px" width="17" height="17" viewBox="0 0 16 16">
<defs><linearGradient id="gearg" x1="0.2" y1="0.1" x2="0.8" y2="0.9"><stop offset="0" stop-color="#f4f6f7"/><stop offset="0.6" stop-color="#d9dfe2"/><stop offset="1" stop-color="#7d8c94"/></linearGradient></defs>
<ellipse cx="9" cy="9.6" rx="6.5" ry="5.8" fill="#000" opacity="0.12"/>
<path d="M8.00 2.00 L8.63 0.53 L10.57 0.95 L10.52 2.55 L11.86 3.40 L13.28 2.68 L14.50 4.25 L13.43 5.45 L13.91 6.96 L15.47 7.32 L15.39 9.30 L13.80 9.53 L13.20 11.00 L14.16 12.28 L12.82 13.75 L11.46 12.90 L10.05 13.64 L9.97 15.24 L8.00 15.50 L7.50 13.98 L5.95 13.64 L4.85 14.81 L3.18 13.75 L3.77 12.26 L2.80 11.00 L1.21 11.19 L0.61 9.30 L2.02 8.54 L2.09 6.96 L0.75 6.08 L1.50 4.25 L3.07 4.58 L4.14 3.40 L3.68 1.87 L5.43 0.95 L6.43 2.21 Z" fill="url(#gearg)" stroke="#8796a0" stroke-width="1.1" stroke-linejoin="round"/>
<ellipse cx="7.7" cy="8.1" rx="3" ry="3.5" fill="#3f5562"/>
<ellipse cx="8.7" cy="7.8" rx="1.6" ry="2.7" fill="#eef1f3"/>
</svg>
<div class="t" style="left:1130.5px;top:169.0px;font-size:13px;color:#3c3c3c;font-weight:normal;">Position:</div>
<div style="position:absolute;left:1199px;top:163px;width:110px;height:24px;box-sizing:border-box;border:1px solid #aaaaaa;border-radius:3px;background:#fff;overflow:hidden;"></div>
<div style="position:absolute;left:1288px;top:164px;width:20px;height:22px;box-sizing:border-box;border-left:1px solid #c4c4c4;border-radius:0 2px 2px 0;background:linear-gradient(#f8f8f8,#e6e6e6);"></div>
<div class="t" style="left:1204px;top:168.8px;font-size:13px;color:#3c3c3c;font-weight:normal;">200 ms</div>
<div style="position:absolute;left:1294.0px;top:173.25px;width:0;height:0;border-left:4.0px solid transparent;border-right:4.0px solid transparent;border-top:4.5px solid #808080;"></div>
<div class="t" style="left:1130.5px;top:194.0px;font-size:13px;color:#3c3c3c;font-weight:normal;">Base:</div>
<div style="position:absolute;left:1199px;top:188px;width:110px;height:24px;box-sizing:border-box;border:1px solid #aaaaaa;border-radius:3px;background:#fff;overflow:hidden;"></div>
<div style="position:absolute;left:1288px;top:189px;width:20px;height:22px;box-sizing:border-box;border-left:1px solid #c4c4c4;border-radius:0 2px 2px 0;background:linear-gradient(#f8f8f8,#e6e6e6);"></div>
<div class="t" style="left:1204px;top:193.8px;font-size:13px;color:#3c3c3c;font-weight:normal;">50 ms/div</div>
<div style="position:absolute;left:1294.0px;top:198.25px;width:0;height:0;border-left:4.0px solid transparent;border-right:4.0px solid transparent;border-top:4.5px solid #808080;"></div>
<div style="position:absolute;left:1127px;top:213px;width:182px;height:26px;box-sizing:border-box;border:1px solid #b0b0b0;border-radius:3px;background:linear-gradient(#dcdcdc,#d2d2d2);"></div>
<svg style="position:absolute;left:1210px;top:215px" width="16" height="22" viewBox="1210 215 16 22">
<defs><linearGradient id="da" x1="0" y1="0" x2="1" y2="0"><stop offset="0" stop-color="#5fbf5a"/><stop offset="0.5" stop-color="#a9dca3"/><stop offset="1" stop-color="#4aa845"/></linearGradient></defs>
<path d="M1216.1 219 H1219.9 V229.2 H1222 L1218 233.2 L1214 229.2 H1216.1 Z" fill="url(#da)" stroke="#3f9a3f" stroke-width="0.8" stroke-linejoin="round"/>
</svg>
<svg style="position:absolute;left:1123px;top:249px" width="17" height="17" viewBox="0 0 16 16">
<defs><linearGradient id="gearg" x1="0.2" y1="0.1" x2="0.8" y2="0.9"><stop offset="0" stop-color="#f4f6f7"/><stop offset="0.6" stop-color="#d9dfe2"/><stop offset="1" stop-color="#7d8c94"/></linearGradient></defs>
<ellipse cx="9" cy="9.6" rx="6.5" ry="5.8" fill="#000" opacity="0.12"/>
<path d="M8.00 2.00 L8.63 0.53 L10.57 0.95 L10.52 2.55 L11.86 3.40 L13.28 2.68 L14.50 4.25 L13.43 5.45 L13.91 6.96 L15.47 7.32 L15.39 9.30 L13.80 9.53 L13.20 11.00 L14.16 12.28 L12.82 13.75 L11.46 12.90 L10.05 13.64 L9.97 15.24 L8.00 15.50 L7.50 13.98 L5.95 13.64 L4.85 14.81 L3.18 13.75 L3.77 12.26 L2.80 11.00 L1.21 11.19 L0.61 9.30 L2.02 8.54 L2.09 6.96 L0.75 6.08 L1.50 4.25 L3.07 4.58 L4.14 3.40 L3.68 1.87 L5.43 0.95 L6.43 2.21 Z" fill="url(#gearg)" stroke="#8796a0" stroke-width="1.1" stroke-linejoin="round"/>
<ellipse cx="7.7" cy="8.1" rx="3" ry="3.5" fill="#3f5562"/>
<ellipse cx="8.7" cy="7.8" rx="1.6" ry="2.7" fill="#eef1f3"/>
</svg>
<div class="t" style="left:1146.5px;top:252.0px;font-size:13px;color:#3c3c3c;font-weight:normal;">Options</div>
<div style="position:absolute;left:1302.0px;top:256.0px;width:0;height:0;border-left:3.0px solid transparent;border-right:3.0px solid transparent;border-top:3px solid #808080;"></div>
<div style="position:absolute;left:1122px;top:271px;width:192px;height:24px;box-sizing:border-box;border:1px solid #b3b3b3;border-radius:3px;background:linear-gradient(#fdfdfd,#ebebeb);"></div>
<svg style="position:absolute;left:1123px;top:275px" width="16" height="16" viewBox="0 0 16 16">
<defs><linearGradient id="plg" x1="0" y1="0" x2="0.7" y2="1"><stop offset="0" stop-color="#bff5a8"/><stop offset="0.5" stop-color="#66d444"/><stop offset="1" stop-color="#36b81a"/></linearGradient></defs><path d="M6.2 1 H9.8 V5.8 H14.5 V9.4 H9.8 V14.5 H6.2 V9.4 H1.2 V5.8 H6.2 Z" fill="url(#plg)" stroke="#3a9a28" stroke-width="0.7" stroke-linejoin="round"/>
</svg>
<div class="t" style="left:1143px;top:277.0px;font-size:13px;color:#3c3c3c;font-weight:normal;">Add Channel</div>
<div style="position:absolute;left:1302.0px;top:282.0px;width:0;height:0;border-left:3.0px solid transparent;border-right:3.0px solid transparent;border-top:3px solid #808080;"></div>
<div style="position:absolute;left:1122px;top:296px;width:192px;height:82px;box-sizing:border-box;border:4px solid #ffd600;background:#e8e8e8;"></div>
<div style="position:absolute;left:1127px;top:304px;width:13px;height:13px;box-sizing:border-box;border:1px solid #b9b9b9;background:#fff;"></div>
<svg style="position:absolute;left:1127px;top:304px" width="13" height="13" viewBox="0 0 13 13"><path d="M3 6.5 L5.5 10 L10 2.5" fill="none" stroke="#333" stroke-width="1.6"/></svg>
<div class="t" style="left:1145px;top:305.0px;font-size:13px;color:#3c3c3c;font-weight:normal;">Channel 1 (1±)</div>
<div style="position:absolute;left:1284px;top:301px;width:26px;height:21px;box-sizing:border-box;border:1px solid #b3b3b3;border-radius:3px;background:linear-gradient(#fdfdfd,#ebebeb);"></div>
<svg style="position:absolute;left:1288px;top:303px" width="17" height="17" viewBox="0 0 16 16">
<defs><linearGradient id="gearg" x1="0.2" y1="0.1" x2="0.8" y2="0.9"><stop offset="0" stop-color="#f4f6f7"/><stop offset="0.6" stop-color="#d9dfe2"/><stop offset="1" stop-color="#7d8c94"/></linearGradient></defs>
<ellipse cx="9" cy="9.6" rx="6.5" ry="5.8" fill="#000" opacity="0.12"/>
<path d="M8.00 2.00 L8.63 0.53 L10.57 0.95 L10.52 2.55 L11.86 3.40 L13.28 2.68 L14.50 4.25 L13.43 5.45 L13.91 6.96 L15.47 7.32 L15.39 9.30 L13.80 9.53 L13.20 11.00 L14.16 12.28 L12.82 13.75 L11.46 12.90 L10.05 13.64 L9.97 15.24 L8.00 15.50 L7.50 13.98 L5.95 13.64 L4.85 14.81 L3.18 13.75 L3.77 12.26 L2.80 11.00 L1.21 11.19 L0.61 9.30 L2.02 8.54 L2.09 6.96 L0.75 6.08 L1.50 4.25 L3.07 4.58 L4.14 3.40 L3.68 1.87 L5.43 0.95 L6.43 2.21 Z" fill="url(#gearg)" stroke="#8796a0" stroke-width="1.1" stroke-linejoin="round"/>
<ellipse cx="7.7" cy="8.1" rx="3" ry="3.5" fill="#3f5562"/>
<ellipse cx="8.7" cy="7.8" rx="1.6" ry="2.7" fill="#eef1f3"/>
</svg>
<div class="t" style="left:1130.5px;top:329.0px;font-size:13px;color:#3c3c3c;font-weight:normal;">Offset:</div>
<div style="position:absolute;left:1199px;top:323px;width:110px;height:24px;box-sizing:border-box;border:1px solid #aaaaaa;border-radius:3px;background:#fff;overflow:hidden;"></div>
<div style="position:absolute;left:1288px;top:324px;width:20px;height:22px;box-sizing:border-box;border-left:1px solid #c4c4c4;border-radius:0 2px 2px 0;background:linear-gradient(#f8f8f8,#e6e6e6);"></div>
<div class="t" style="left:1204px;top:328.8px;font-size:13px;color:#3c3c3c;font-weight:normal;">-20 V</div>
<div style="position:absolute;left:1294.0px;top:333.25px;width:0;height:0;border-left:4.0px solid transparent;border-right:4.0px solid transparent;border-top:4.5px solid #808080;"></div>
<div class="t" style="left:1130.5px;top:354.0px;font-size:13px;color:#3c3c3c;font-weight:normal;">Range:</div>
<div style="position:absolute;left:1199px;top:349px;width:110px;height:23px;box-sizing:border-box;border:1px solid #aaaaaa;border-radius:3px;background:#fff;overflow:hidden;"></div>
<div style="position:absolute;left:1288px;top:350px;width:20px;height:21px;box-sizing:border-box;border-left:1px solid #c4c4c4;border-radius:0 2px 2px 0;background:linear-gradient(#f8f8f8,#e6e6e6);"></div>
<div class="t" style="left:1204px;top:354.8px;font-size:13px;color:#3c3c3c;font-weight:normal;">5 V/div</div>
<div style="position:absolute;left:1294.0px;top:358.75px;width:0;height:0;border-left:4.0px solid transparent;border-right:4.0px solid transparent;border-top:4.5px solid #808080;"></div>
<div style="position:absolute;left:1122px;top:378px;width:192px;height:82px;box-sizing:border-box;border:4px solid #00bbff;background:#e8e8e8;"></div>
<div style="position:absolute;left:1127px;top:386px;width:13px;height:13px;box-sizing:border-box;border:1px solid #b9b9b9;background:#fff;"></div>
<svg style="position:absolute;left:1127px;top:386px" width="13" height="13" viewBox="0 0 13 13"><path d="M3 6.5 L5.5 10 L10 2.5" fill="none" stroke="#333" stroke-width="1.6"/></svg>
<div class="t" style="left:1145px;top:387.0px;font-size:13px;color:#3c3c3c;font-weight:normal;">Channel 2 (2±)</div>
<div style="position:absolute;left:1284px;top:383px;width:26px;height:21px;box-sizing:border-box;border:1px solid #b3b3b3;border-radius:3px;background:linear-gradient(#fdfdfd,#ebebeb);"></div>
<svg style="position:absolute;left:1288px;top:385px" width="17" height="17" viewBox="0 0 16 16">
<defs><linearGradient id="gearg" x1="0.2" y1="0.1" x2="0.8" y2="0.9"><stop offset="0" stop-color="#f4f6f7"/><stop offset="0.6" stop-color="#d9dfe2"/><stop offset="1" stop-color="#7d8c94"/></linearGradient></defs>
<ellipse cx="9" cy="9.6" rx="6.5" ry="5.8" fill="#000" opacity="0.12"/>
<path d="M8.00 2.00 L8.63 0.53 L10.57 0.95 L10.52 2.55 L11.86 3.40 L13.28 2.68 L14.50 4.25 L13.43 5.45 L13.91 6.96 L15.47 7.32 L15.39 9.30 L13.80 9.53 L13.20 11.00 L14.16 12.28 L12.82 13.75 L11.46 12.90 L10.05 13.64 L9.97 15.24 L8.00 15.50 L7.50 13.98 L5.95 13.64 L4.85 14.81 L3.18 13.75 L3.77 12.26 L2.80 11.00 L1.21 11.19 L0.61 9.30 L2.02 8.54 L2.09 6.96 L0.75 6.08 L1.50 4.25 L3.07 4.58 L4.14 3.40 L3.68 1.87 L5.43 0.95 L6.43 2.21 Z" fill="url(#gearg)" stroke="#8796a0" stroke-width="1.1" stroke-linejoin="round"/>
<ellipse cx="7.7" cy="8.1" rx="3" ry="3.5" fill="#3f5562"/>
<ellipse cx="8.7" cy="7.8" rx="1.6" ry="2.7" fill="#eef1f3"/>
</svg>
<div class="t" style="left:1130.5px;top:411.0px;font-size:13px;color:#3c3c3c;font-weight:normal;">Offset:</div>
<div style="position:absolute;left:1199px;top:405px;width:110px;height:24px;box-sizing:border-box;border:1px solid #aaaaaa;border-radius:3px;background:#fff;overflow:hidden;"></div>
<div style="position:absolute;left:1288px;top:406px;width:20px;height:22px;box-sizing:border-box;border-left:1px solid #c4c4c4;border-radius:0 2px 2px 0;background:linear-gradient(#f8f8f8,#e6e6e6);"></div>
<div class="t" style="left:1204px;top:410.8px;font-size:13px;color:#3c3c3c;font-weight:normal;">0 V</div>
<div style="position:absolute;left:1294.0px;top:415.25px;width:0;height:0;border-left:4.0px solid transparent;border-right:4.0px solid transparent;border-top:4.5px solid #808080;"></div>
<div class="t" style="left:1130.5px;top:436.0px;font-size:13px;color:#3c3c3c;font-weight:normal;">Range:</div>
<div style="position:absolute;left:1199px;top:431px;width:110px;height:23px;box-sizing:border-box;border:1px solid #aaaaaa;border-radius:3px;background:#fff;overflow:hidden;"></div>
<div style="position:absolute;left:1288px;top:432px;width:20px;height:21px;box-sizing:border-box;border-left:1px solid #c4c4c4;border-radius:0 2px 2px 0;background:linear-gradient(#f8f8f8,#e6e6e6);"></div>
<div class="t" style="left:1204px;top:436.8px;font-size:13px;color:#3c3c3c;font-weight:normal;">2 V/div</div>
<div style="position:absolute;left:1294.0px;top:440.75px;width:0;height:0;border-left:4.0px solid transparent;border-right:4.0px solid transparent;border-top:4.5px solid #808080;"></div>
</body></html>
